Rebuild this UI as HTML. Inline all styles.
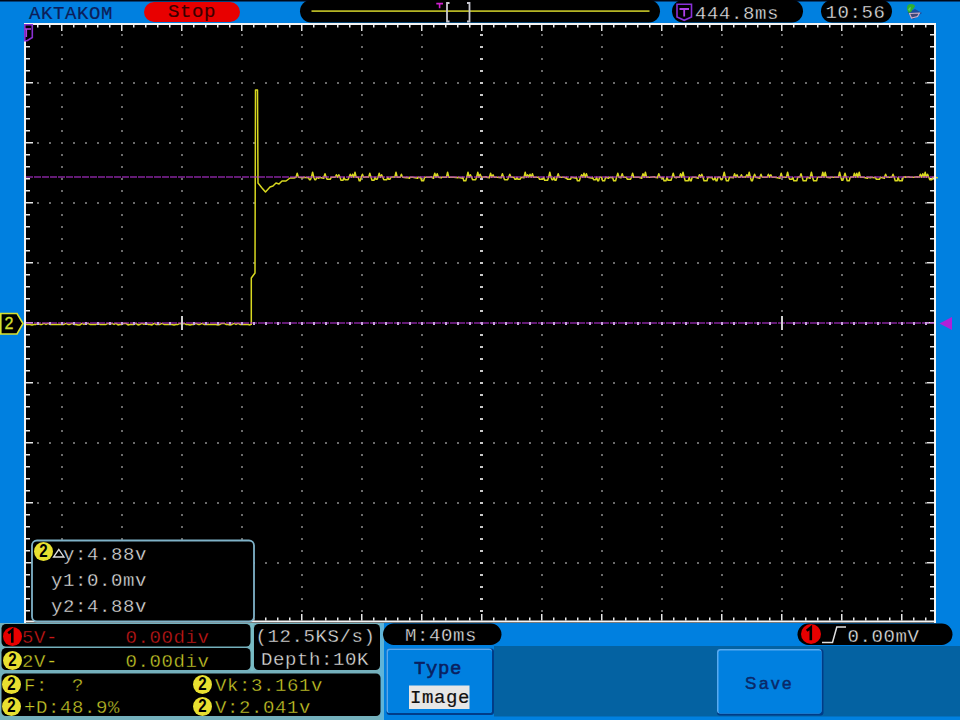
<!DOCTYPE html>
<html><head><meta charset="utf-8"><style>
html,body{margin:0;padding:0;overflow:hidden;}
body{width:960px;height:720px;position:relative;overflow:hidden;background:#0080e0;font-family:"Liberation Mono",monospace;}
.a{position:absolute;}
.t{position:absolute;white-space:pre;line-height:1;}
</style></head><body>
<div class="a" style="left:0;top:0;width:960px;height:1px;background:#000818"></div><div class="a" style="left:0;top:1px;width:960px;height:1px;background:#04407a"></div>
<svg width="960" height="720" viewBox="0 0 960 720" style="position:absolute;left:0;top:0">
<rect x="24" y="23" width="912" height="600" fill="#000"/>
<path d="M61 34h2v2h-2zM61 46h2v2h-2zM61 58h2v2h-2zM61 70h2v2h-2zM61 82h2v2h-2zM61 94h2v2h-2zM61 106h2v2h-2zM61 118h2v2h-2zM61 130h2v2h-2zM61 142h2v2h-2zM61 154h2v2h-2zM61 166h2v2h-2zM61 178h2v2h-2zM61 190h2v2h-2zM61 202h2v2h-2zM61 214h2v2h-2zM61 226h2v2h-2zM61 238h2v2h-2zM61 250h2v2h-2zM61 262h2v2h-2zM61 274h2v2h-2zM61 286h2v2h-2zM61 298h2v2h-2zM61 310h2v2h-2zM61 322h2v2h-2zM61 334h2v2h-2zM61 346h2v2h-2zM61 358h2v2h-2zM61 370h2v2h-2zM61 382h2v2h-2zM61 394h2v2h-2zM61 406h2v2h-2zM61 418h2v2h-2zM61 430h2v2h-2zM61 442h2v2h-2zM61 454h2v2h-2zM61 466h2v2h-2zM61 478h2v2h-2zM61 490h2v2h-2zM61 502h2v2h-2zM61 514h2v2h-2zM61 526h2v2h-2zM61 538h2v2h-2zM61 550h2v2h-2zM61 562h2v2h-2zM61 574h2v2h-2zM61 586h2v2h-2zM61 598h2v2h-2zM61 610h2v2h-2zM121 34h2v2h-2zM121 46h2v2h-2zM121 58h2v2h-2zM121 70h2v2h-2zM121 82h2v2h-2zM121 94h2v2h-2zM121 106h2v2h-2zM121 118h2v2h-2zM121 130h2v2h-2zM121 142h2v2h-2zM121 154h2v2h-2zM121 166h2v2h-2zM121 178h2v2h-2zM121 190h2v2h-2zM121 202h2v2h-2zM121 214h2v2h-2zM121 226h2v2h-2zM121 238h2v2h-2zM121 250h2v2h-2zM121 262h2v2h-2zM121 274h2v2h-2zM121 286h2v2h-2zM121 298h2v2h-2zM121 310h2v2h-2zM121 322h2v2h-2zM121 334h2v2h-2zM121 346h2v2h-2zM121 358h2v2h-2zM121 370h2v2h-2zM121 382h2v2h-2zM121 394h2v2h-2zM121 406h2v2h-2zM121 418h2v2h-2zM121 430h2v2h-2zM121 442h2v2h-2zM121 454h2v2h-2zM121 466h2v2h-2zM121 478h2v2h-2zM121 490h2v2h-2zM121 502h2v2h-2zM121 514h2v2h-2zM121 526h2v2h-2zM121 538h2v2h-2zM121 550h2v2h-2zM121 562h2v2h-2zM121 574h2v2h-2zM121 586h2v2h-2zM121 598h2v2h-2zM121 610h2v2h-2zM181 34h2v2h-2zM181 46h2v2h-2zM181 58h2v2h-2zM181 70h2v2h-2zM181 82h2v2h-2zM181 94h2v2h-2zM181 106h2v2h-2zM181 118h2v2h-2zM181 130h2v2h-2zM181 142h2v2h-2zM181 154h2v2h-2zM181 166h2v2h-2zM181 178h2v2h-2zM181 190h2v2h-2zM181 202h2v2h-2zM181 214h2v2h-2zM181 226h2v2h-2zM181 238h2v2h-2zM181 250h2v2h-2zM181 262h2v2h-2zM181 274h2v2h-2zM181 286h2v2h-2zM181 298h2v2h-2zM181 310h2v2h-2zM181 322h2v2h-2zM181 334h2v2h-2zM181 346h2v2h-2zM181 358h2v2h-2zM181 370h2v2h-2zM181 382h2v2h-2zM181 394h2v2h-2zM181 406h2v2h-2zM181 418h2v2h-2zM181 430h2v2h-2zM181 442h2v2h-2zM181 454h2v2h-2zM181 466h2v2h-2zM181 478h2v2h-2zM181 490h2v2h-2zM181 502h2v2h-2zM181 514h2v2h-2zM181 526h2v2h-2zM181 538h2v2h-2zM181 550h2v2h-2zM181 562h2v2h-2zM181 574h2v2h-2zM181 586h2v2h-2zM181 598h2v2h-2zM181 610h2v2h-2zM241 34h2v2h-2zM241 46h2v2h-2zM241 58h2v2h-2zM241 70h2v2h-2zM241 82h2v2h-2zM241 94h2v2h-2zM241 106h2v2h-2zM241 118h2v2h-2zM241 130h2v2h-2zM241 142h2v2h-2zM241 154h2v2h-2zM241 166h2v2h-2zM241 178h2v2h-2zM241 190h2v2h-2zM241 202h2v2h-2zM241 214h2v2h-2zM241 226h2v2h-2zM241 238h2v2h-2zM241 250h2v2h-2zM241 262h2v2h-2zM241 274h2v2h-2zM241 286h2v2h-2zM241 298h2v2h-2zM241 310h2v2h-2zM241 322h2v2h-2zM241 334h2v2h-2zM241 346h2v2h-2zM241 358h2v2h-2zM241 370h2v2h-2zM241 382h2v2h-2zM241 394h2v2h-2zM241 406h2v2h-2zM241 418h2v2h-2zM241 430h2v2h-2zM241 442h2v2h-2zM241 454h2v2h-2zM241 466h2v2h-2zM241 478h2v2h-2zM241 490h2v2h-2zM241 502h2v2h-2zM241 514h2v2h-2zM241 526h2v2h-2zM241 538h2v2h-2zM241 550h2v2h-2zM241 562h2v2h-2zM241 574h2v2h-2zM241 586h2v2h-2zM241 598h2v2h-2zM241 610h2v2h-2zM301 34h2v2h-2zM301 46h2v2h-2zM301 58h2v2h-2zM301 70h2v2h-2zM301 82h2v2h-2zM301 94h2v2h-2zM301 106h2v2h-2zM301 118h2v2h-2zM301 130h2v2h-2zM301 142h2v2h-2zM301 154h2v2h-2zM301 166h2v2h-2zM301 178h2v2h-2zM301 190h2v2h-2zM301 202h2v2h-2zM301 214h2v2h-2zM301 226h2v2h-2zM301 238h2v2h-2zM301 250h2v2h-2zM301 262h2v2h-2zM301 274h2v2h-2zM301 286h2v2h-2zM301 298h2v2h-2zM301 310h2v2h-2zM301 322h2v2h-2zM301 334h2v2h-2zM301 346h2v2h-2zM301 358h2v2h-2zM301 370h2v2h-2zM301 382h2v2h-2zM301 394h2v2h-2zM301 406h2v2h-2zM301 418h2v2h-2zM301 430h2v2h-2zM301 442h2v2h-2zM301 454h2v2h-2zM301 466h2v2h-2zM301 478h2v2h-2zM301 490h2v2h-2zM301 502h2v2h-2zM301 514h2v2h-2zM301 526h2v2h-2zM301 538h2v2h-2zM301 550h2v2h-2zM301 562h2v2h-2zM301 574h2v2h-2zM301 586h2v2h-2zM301 598h2v2h-2zM301 610h2v2h-2zM361 34h2v2h-2zM361 46h2v2h-2zM361 58h2v2h-2zM361 70h2v2h-2zM361 82h2v2h-2zM361 94h2v2h-2zM361 106h2v2h-2zM361 118h2v2h-2zM361 130h2v2h-2zM361 142h2v2h-2zM361 154h2v2h-2zM361 166h2v2h-2zM361 178h2v2h-2zM361 190h2v2h-2zM361 202h2v2h-2zM361 214h2v2h-2zM361 226h2v2h-2zM361 238h2v2h-2zM361 250h2v2h-2zM361 262h2v2h-2zM361 274h2v2h-2zM361 286h2v2h-2zM361 298h2v2h-2zM361 310h2v2h-2zM361 322h2v2h-2zM361 334h2v2h-2zM361 346h2v2h-2zM361 358h2v2h-2zM361 370h2v2h-2zM361 382h2v2h-2zM361 394h2v2h-2zM361 406h2v2h-2zM361 418h2v2h-2zM361 430h2v2h-2zM361 442h2v2h-2zM361 454h2v2h-2zM361 466h2v2h-2zM361 478h2v2h-2zM361 490h2v2h-2zM361 502h2v2h-2zM361 514h2v2h-2zM361 526h2v2h-2zM361 538h2v2h-2zM361 550h2v2h-2zM361 562h2v2h-2zM361 574h2v2h-2zM361 586h2v2h-2zM361 598h2v2h-2zM361 610h2v2h-2zM421 34h2v2h-2zM421 46h2v2h-2zM421 58h2v2h-2zM421 70h2v2h-2zM421 82h2v2h-2zM421 94h2v2h-2zM421 106h2v2h-2zM421 118h2v2h-2zM421 130h2v2h-2zM421 142h2v2h-2zM421 154h2v2h-2zM421 166h2v2h-2zM421 178h2v2h-2zM421 190h2v2h-2zM421 202h2v2h-2zM421 214h2v2h-2zM421 226h2v2h-2zM421 238h2v2h-2zM421 250h2v2h-2zM421 262h2v2h-2zM421 274h2v2h-2zM421 286h2v2h-2zM421 298h2v2h-2zM421 310h2v2h-2zM421 322h2v2h-2zM421 334h2v2h-2zM421 346h2v2h-2zM421 358h2v2h-2zM421 370h2v2h-2zM421 382h2v2h-2zM421 394h2v2h-2zM421 406h2v2h-2zM421 418h2v2h-2zM421 430h2v2h-2zM421 442h2v2h-2zM421 454h2v2h-2zM421 466h2v2h-2zM421 478h2v2h-2zM421 490h2v2h-2zM421 502h2v2h-2zM421 514h2v2h-2zM421 526h2v2h-2zM421 538h2v2h-2zM421 550h2v2h-2zM421 562h2v2h-2zM421 574h2v2h-2zM421 586h2v2h-2zM421 598h2v2h-2zM421 610h2v2h-2zM541 34h2v2h-2zM541 46h2v2h-2zM541 58h2v2h-2zM541 70h2v2h-2zM541 82h2v2h-2zM541 94h2v2h-2zM541 106h2v2h-2zM541 118h2v2h-2zM541 130h2v2h-2zM541 142h2v2h-2zM541 154h2v2h-2zM541 166h2v2h-2zM541 178h2v2h-2zM541 190h2v2h-2zM541 202h2v2h-2zM541 214h2v2h-2zM541 226h2v2h-2zM541 238h2v2h-2zM541 250h2v2h-2zM541 262h2v2h-2zM541 274h2v2h-2zM541 286h2v2h-2zM541 298h2v2h-2zM541 310h2v2h-2zM541 322h2v2h-2zM541 334h2v2h-2zM541 346h2v2h-2zM541 358h2v2h-2zM541 370h2v2h-2zM541 382h2v2h-2zM541 394h2v2h-2zM541 406h2v2h-2zM541 418h2v2h-2zM541 430h2v2h-2zM541 442h2v2h-2zM541 454h2v2h-2zM541 466h2v2h-2zM541 478h2v2h-2zM541 490h2v2h-2zM541 502h2v2h-2zM541 514h2v2h-2zM541 526h2v2h-2zM541 538h2v2h-2zM541 550h2v2h-2zM541 562h2v2h-2zM541 574h2v2h-2zM541 586h2v2h-2zM541 598h2v2h-2zM541 610h2v2h-2zM601 34h2v2h-2zM601 46h2v2h-2zM601 58h2v2h-2zM601 70h2v2h-2zM601 82h2v2h-2zM601 94h2v2h-2zM601 106h2v2h-2zM601 118h2v2h-2zM601 130h2v2h-2zM601 142h2v2h-2zM601 154h2v2h-2zM601 166h2v2h-2zM601 178h2v2h-2zM601 190h2v2h-2zM601 202h2v2h-2zM601 214h2v2h-2zM601 226h2v2h-2zM601 238h2v2h-2zM601 250h2v2h-2zM601 262h2v2h-2zM601 274h2v2h-2zM601 286h2v2h-2zM601 298h2v2h-2zM601 310h2v2h-2zM601 322h2v2h-2zM601 334h2v2h-2zM601 346h2v2h-2zM601 358h2v2h-2zM601 370h2v2h-2zM601 382h2v2h-2zM601 394h2v2h-2zM601 406h2v2h-2zM601 418h2v2h-2zM601 430h2v2h-2zM601 442h2v2h-2zM601 454h2v2h-2zM601 466h2v2h-2zM601 478h2v2h-2zM601 490h2v2h-2zM601 502h2v2h-2zM601 514h2v2h-2zM601 526h2v2h-2zM601 538h2v2h-2zM601 550h2v2h-2zM601 562h2v2h-2zM601 574h2v2h-2zM601 586h2v2h-2zM601 598h2v2h-2zM601 610h2v2h-2zM661 34h2v2h-2zM661 46h2v2h-2zM661 58h2v2h-2zM661 70h2v2h-2zM661 82h2v2h-2zM661 94h2v2h-2zM661 106h2v2h-2zM661 118h2v2h-2zM661 130h2v2h-2zM661 142h2v2h-2zM661 154h2v2h-2zM661 166h2v2h-2zM661 178h2v2h-2zM661 190h2v2h-2zM661 202h2v2h-2zM661 214h2v2h-2zM661 226h2v2h-2zM661 238h2v2h-2zM661 250h2v2h-2zM661 262h2v2h-2zM661 274h2v2h-2zM661 286h2v2h-2zM661 298h2v2h-2zM661 310h2v2h-2zM661 322h2v2h-2zM661 334h2v2h-2zM661 346h2v2h-2zM661 358h2v2h-2zM661 370h2v2h-2zM661 382h2v2h-2zM661 394h2v2h-2zM661 406h2v2h-2zM661 418h2v2h-2zM661 430h2v2h-2zM661 442h2v2h-2zM661 454h2v2h-2zM661 466h2v2h-2zM661 478h2v2h-2zM661 490h2v2h-2zM661 502h2v2h-2zM661 514h2v2h-2zM661 526h2v2h-2zM661 538h2v2h-2zM661 550h2v2h-2zM661 562h2v2h-2zM661 574h2v2h-2zM661 586h2v2h-2zM661 598h2v2h-2zM661 610h2v2h-2zM721 34h2v2h-2zM721 46h2v2h-2zM721 58h2v2h-2zM721 70h2v2h-2zM721 82h2v2h-2zM721 94h2v2h-2zM721 106h2v2h-2zM721 118h2v2h-2zM721 130h2v2h-2zM721 142h2v2h-2zM721 154h2v2h-2zM721 166h2v2h-2zM721 178h2v2h-2zM721 190h2v2h-2zM721 202h2v2h-2zM721 214h2v2h-2zM721 226h2v2h-2zM721 238h2v2h-2zM721 250h2v2h-2zM721 262h2v2h-2zM721 274h2v2h-2zM721 286h2v2h-2zM721 298h2v2h-2zM721 310h2v2h-2zM721 322h2v2h-2zM721 334h2v2h-2zM721 346h2v2h-2zM721 358h2v2h-2zM721 370h2v2h-2zM721 382h2v2h-2zM721 394h2v2h-2zM721 406h2v2h-2zM721 418h2v2h-2zM721 430h2v2h-2zM721 442h2v2h-2zM721 454h2v2h-2zM721 466h2v2h-2zM721 478h2v2h-2zM721 490h2v2h-2zM721 502h2v2h-2zM721 514h2v2h-2zM721 526h2v2h-2zM721 538h2v2h-2zM721 550h2v2h-2zM721 562h2v2h-2zM721 574h2v2h-2zM721 586h2v2h-2zM721 598h2v2h-2zM721 610h2v2h-2zM781 34h2v2h-2zM781 46h2v2h-2zM781 58h2v2h-2zM781 70h2v2h-2zM781 82h2v2h-2zM781 94h2v2h-2zM781 106h2v2h-2zM781 118h2v2h-2zM781 130h2v2h-2zM781 142h2v2h-2zM781 154h2v2h-2zM781 166h2v2h-2zM781 178h2v2h-2zM781 190h2v2h-2zM781 202h2v2h-2zM781 214h2v2h-2zM781 226h2v2h-2zM781 238h2v2h-2zM781 250h2v2h-2zM781 262h2v2h-2zM781 274h2v2h-2zM781 286h2v2h-2zM781 298h2v2h-2zM781 310h2v2h-2zM781 322h2v2h-2zM781 334h2v2h-2zM781 346h2v2h-2zM781 358h2v2h-2zM781 370h2v2h-2zM781 382h2v2h-2zM781 394h2v2h-2zM781 406h2v2h-2zM781 418h2v2h-2zM781 430h2v2h-2zM781 442h2v2h-2zM781 454h2v2h-2zM781 466h2v2h-2zM781 478h2v2h-2zM781 490h2v2h-2zM781 502h2v2h-2zM781 514h2v2h-2zM781 526h2v2h-2zM781 538h2v2h-2zM781 550h2v2h-2zM781 562h2v2h-2zM781 574h2v2h-2zM781 586h2v2h-2zM781 598h2v2h-2zM781 610h2v2h-2zM841 34h2v2h-2zM841 46h2v2h-2zM841 58h2v2h-2zM841 70h2v2h-2zM841 82h2v2h-2zM841 94h2v2h-2zM841 106h2v2h-2zM841 118h2v2h-2zM841 130h2v2h-2zM841 142h2v2h-2zM841 154h2v2h-2zM841 166h2v2h-2zM841 178h2v2h-2zM841 190h2v2h-2zM841 202h2v2h-2zM841 214h2v2h-2zM841 226h2v2h-2zM841 238h2v2h-2zM841 250h2v2h-2zM841 262h2v2h-2zM841 274h2v2h-2zM841 286h2v2h-2zM841 298h2v2h-2zM841 310h2v2h-2zM841 322h2v2h-2zM841 334h2v2h-2zM841 346h2v2h-2zM841 358h2v2h-2zM841 370h2v2h-2zM841 382h2v2h-2zM841 394h2v2h-2zM841 406h2v2h-2zM841 418h2v2h-2zM841 430h2v2h-2zM841 442h2v2h-2zM841 454h2v2h-2zM841 466h2v2h-2zM841 478h2v2h-2zM841 490h2v2h-2zM841 502h2v2h-2zM841 514h2v2h-2zM841 526h2v2h-2zM841 538h2v2h-2zM841 550h2v2h-2zM841 562h2v2h-2zM841 574h2v2h-2zM841 586h2v2h-2zM841 598h2v2h-2zM841 610h2v2h-2zM901 34h2v2h-2zM901 46h2v2h-2zM901 58h2v2h-2zM901 70h2v2h-2zM901 82h2v2h-2zM901 94h2v2h-2zM901 106h2v2h-2zM901 118h2v2h-2zM901 130h2v2h-2zM901 142h2v2h-2zM901 154h2v2h-2zM901 166h2v2h-2zM901 178h2v2h-2zM901 190h2v2h-2zM901 202h2v2h-2zM901 214h2v2h-2zM901 226h2v2h-2zM901 238h2v2h-2zM901 250h2v2h-2zM901 262h2v2h-2zM901 274h2v2h-2zM901 286h2v2h-2zM901 298h2v2h-2zM901 310h2v2h-2zM901 322h2v2h-2zM901 334h2v2h-2zM901 346h2v2h-2zM901 358h2v2h-2zM901 370h2v2h-2zM901 382h2v2h-2zM901 394h2v2h-2zM901 406h2v2h-2zM901 418h2v2h-2zM901 430h2v2h-2zM901 442h2v2h-2zM901 454h2v2h-2zM901 466h2v2h-2zM901 478h2v2h-2zM901 490h2v2h-2zM901 502h2v2h-2zM901 514h2v2h-2zM901 526h2v2h-2zM901 538h2v2h-2zM901 550h2v2h-2zM901 562h2v2h-2zM901 574h2v2h-2zM901 586h2v2h-2zM901 598h2v2h-2zM901 610h2v2h-2zM37 82h2v2h-2zM49 82h2v2h-2zM61 82h2v2h-2zM73 82h2v2h-2zM85 82h2v2h-2zM97 82h2v2h-2zM109 82h2v2h-2zM121 82h2v2h-2zM133 82h2v2h-2zM145 82h2v2h-2zM157 82h2v2h-2zM169 82h2v2h-2zM181 82h2v2h-2zM193 82h2v2h-2zM205 82h2v2h-2zM217 82h2v2h-2zM229 82h2v2h-2zM241 82h2v2h-2zM253 82h2v2h-2zM265 82h2v2h-2zM277 82h2v2h-2zM289 82h2v2h-2zM301 82h2v2h-2zM313 82h2v2h-2zM325 82h2v2h-2zM337 82h2v2h-2zM349 82h2v2h-2zM361 82h2v2h-2zM373 82h2v2h-2zM385 82h2v2h-2zM397 82h2v2h-2zM409 82h2v2h-2zM421 82h2v2h-2zM433 82h2v2h-2zM445 82h2v2h-2zM457 82h2v2h-2zM469 82h2v2h-2zM481 82h2v2h-2zM493 82h2v2h-2zM505 82h2v2h-2zM517 82h2v2h-2zM529 82h2v2h-2zM541 82h2v2h-2zM553 82h2v2h-2zM565 82h2v2h-2zM577 82h2v2h-2zM589 82h2v2h-2zM601 82h2v2h-2zM613 82h2v2h-2zM625 82h2v2h-2zM637 82h2v2h-2zM649 82h2v2h-2zM661 82h2v2h-2zM673 82h2v2h-2zM685 82h2v2h-2zM697 82h2v2h-2zM709 82h2v2h-2zM721 82h2v2h-2zM733 82h2v2h-2zM745 82h2v2h-2zM757 82h2v2h-2zM769 82h2v2h-2zM781 82h2v2h-2zM793 82h2v2h-2zM805 82h2v2h-2zM817 82h2v2h-2zM829 82h2v2h-2zM841 82h2v2h-2zM853 82h2v2h-2zM865 82h2v2h-2zM877 82h2v2h-2zM889 82h2v2h-2zM901 82h2v2h-2zM913 82h2v2h-2zM925 82h2v2h-2zM37 142h2v2h-2zM49 142h2v2h-2zM61 142h2v2h-2zM73 142h2v2h-2zM85 142h2v2h-2zM97 142h2v2h-2zM109 142h2v2h-2zM121 142h2v2h-2zM133 142h2v2h-2zM145 142h2v2h-2zM157 142h2v2h-2zM169 142h2v2h-2zM181 142h2v2h-2zM193 142h2v2h-2zM205 142h2v2h-2zM217 142h2v2h-2zM229 142h2v2h-2zM241 142h2v2h-2zM253 142h2v2h-2zM265 142h2v2h-2zM277 142h2v2h-2zM289 142h2v2h-2zM301 142h2v2h-2zM313 142h2v2h-2zM325 142h2v2h-2zM337 142h2v2h-2zM349 142h2v2h-2zM361 142h2v2h-2zM373 142h2v2h-2zM385 142h2v2h-2zM397 142h2v2h-2zM409 142h2v2h-2zM421 142h2v2h-2zM433 142h2v2h-2zM445 142h2v2h-2zM457 142h2v2h-2zM469 142h2v2h-2zM481 142h2v2h-2zM493 142h2v2h-2zM505 142h2v2h-2zM517 142h2v2h-2zM529 142h2v2h-2zM541 142h2v2h-2zM553 142h2v2h-2zM565 142h2v2h-2zM577 142h2v2h-2zM589 142h2v2h-2zM601 142h2v2h-2zM613 142h2v2h-2zM625 142h2v2h-2zM637 142h2v2h-2zM649 142h2v2h-2zM661 142h2v2h-2zM673 142h2v2h-2zM685 142h2v2h-2zM697 142h2v2h-2zM709 142h2v2h-2zM721 142h2v2h-2zM733 142h2v2h-2zM745 142h2v2h-2zM757 142h2v2h-2zM769 142h2v2h-2zM781 142h2v2h-2zM793 142h2v2h-2zM805 142h2v2h-2zM817 142h2v2h-2zM829 142h2v2h-2zM841 142h2v2h-2zM853 142h2v2h-2zM865 142h2v2h-2zM877 142h2v2h-2zM889 142h2v2h-2zM901 142h2v2h-2zM913 142h2v2h-2zM925 142h2v2h-2zM37 202h2v2h-2zM49 202h2v2h-2zM61 202h2v2h-2zM73 202h2v2h-2zM85 202h2v2h-2zM97 202h2v2h-2zM109 202h2v2h-2zM121 202h2v2h-2zM133 202h2v2h-2zM145 202h2v2h-2zM157 202h2v2h-2zM169 202h2v2h-2zM181 202h2v2h-2zM193 202h2v2h-2zM205 202h2v2h-2zM217 202h2v2h-2zM229 202h2v2h-2zM241 202h2v2h-2zM253 202h2v2h-2zM265 202h2v2h-2zM277 202h2v2h-2zM289 202h2v2h-2zM301 202h2v2h-2zM313 202h2v2h-2zM325 202h2v2h-2zM337 202h2v2h-2zM349 202h2v2h-2zM361 202h2v2h-2zM373 202h2v2h-2zM385 202h2v2h-2zM397 202h2v2h-2zM409 202h2v2h-2zM421 202h2v2h-2zM433 202h2v2h-2zM445 202h2v2h-2zM457 202h2v2h-2zM469 202h2v2h-2zM481 202h2v2h-2zM493 202h2v2h-2zM505 202h2v2h-2zM517 202h2v2h-2zM529 202h2v2h-2zM541 202h2v2h-2zM553 202h2v2h-2zM565 202h2v2h-2zM577 202h2v2h-2zM589 202h2v2h-2zM601 202h2v2h-2zM613 202h2v2h-2zM625 202h2v2h-2zM637 202h2v2h-2zM649 202h2v2h-2zM661 202h2v2h-2zM673 202h2v2h-2zM685 202h2v2h-2zM697 202h2v2h-2zM709 202h2v2h-2zM721 202h2v2h-2zM733 202h2v2h-2zM745 202h2v2h-2zM757 202h2v2h-2zM769 202h2v2h-2zM781 202h2v2h-2zM793 202h2v2h-2zM805 202h2v2h-2zM817 202h2v2h-2zM829 202h2v2h-2zM841 202h2v2h-2zM853 202h2v2h-2zM865 202h2v2h-2zM877 202h2v2h-2zM889 202h2v2h-2zM901 202h2v2h-2zM913 202h2v2h-2zM925 202h2v2h-2zM37 262h2v2h-2zM49 262h2v2h-2zM61 262h2v2h-2zM73 262h2v2h-2zM85 262h2v2h-2zM97 262h2v2h-2zM109 262h2v2h-2zM121 262h2v2h-2zM133 262h2v2h-2zM145 262h2v2h-2zM157 262h2v2h-2zM169 262h2v2h-2zM181 262h2v2h-2zM193 262h2v2h-2zM205 262h2v2h-2zM217 262h2v2h-2zM229 262h2v2h-2zM241 262h2v2h-2zM253 262h2v2h-2zM265 262h2v2h-2zM277 262h2v2h-2zM289 262h2v2h-2zM301 262h2v2h-2zM313 262h2v2h-2zM325 262h2v2h-2zM337 262h2v2h-2zM349 262h2v2h-2zM361 262h2v2h-2zM373 262h2v2h-2zM385 262h2v2h-2zM397 262h2v2h-2zM409 262h2v2h-2zM421 262h2v2h-2zM433 262h2v2h-2zM445 262h2v2h-2zM457 262h2v2h-2zM469 262h2v2h-2zM481 262h2v2h-2zM493 262h2v2h-2zM505 262h2v2h-2zM517 262h2v2h-2zM529 262h2v2h-2zM541 262h2v2h-2zM553 262h2v2h-2zM565 262h2v2h-2zM577 262h2v2h-2zM589 262h2v2h-2zM601 262h2v2h-2zM613 262h2v2h-2zM625 262h2v2h-2zM637 262h2v2h-2zM649 262h2v2h-2zM661 262h2v2h-2zM673 262h2v2h-2zM685 262h2v2h-2zM697 262h2v2h-2zM709 262h2v2h-2zM721 262h2v2h-2zM733 262h2v2h-2zM745 262h2v2h-2zM757 262h2v2h-2zM769 262h2v2h-2zM781 262h2v2h-2zM793 262h2v2h-2zM805 262h2v2h-2zM817 262h2v2h-2zM829 262h2v2h-2zM841 262h2v2h-2zM853 262h2v2h-2zM865 262h2v2h-2zM877 262h2v2h-2zM889 262h2v2h-2zM901 262h2v2h-2zM913 262h2v2h-2zM925 262h2v2h-2zM37 382h2v2h-2zM49 382h2v2h-2zM61 382h2v2h-2zM73 382h2v2h-2zM85 382h2v2h-2zM97 382h2v2h-2zM109 382h2v2h-2zM121 382h2v2h-2zM133 382h2v2h-2zM145 382h2v2h-2zM157 382h2v2h-2zM169 382h2v2h-2zM181 382h2v2h-2zM193 382h2v2h-2zM205 382h2v2h-2zM217 382h2v2h-2zM229 382h2v2h-2zM241 382h2v2h-2zM253 382h2v2h-2zM265 382h2v2h-2zM277 382h2v2h-2zM289 382h2v2h-2zM301 382h2v2h-2zM313 382h2v2h-2zM325 382h2v2h-2zM337 382h2v2h-2zM349 382h2v2h-2zM361 382h2v2h-2zM373 382h2v2h-2zM385 382h2v2h-2zM397 382h2v2h-2zM409 382h2v2h-2zM421 382h2v2h-2zM433 382h2v2h-2zM445 382h2v2h-2zM457 382h2v2h-2zM469 382h2v2h-2zM481 382h2v2h-2zM493 382h2v2h-2zM505 382h2v2h-2zM517 382h2v2h-2zM529 382h2v2h-2zM541 382h2v2h-2zM553 382h2v2h-2zM565 382h2v2h-2zM577 382h2v2h-2zM589 382h2v2h-2zM601 382h2v2h-2zM613 382h2v2h-2zM625 382h2v2h-2zM637 382h2v2h-2zM649 382h2v2h-2zM661 382h2v2h-2zM673 382h2v2h-2zM685 382h2v2h-2zM697 382h2v2h-2zM709 382h2v2h-2zM721 382h2v2h-2zM733 382h2v2h-2zM745 382h2v2h-2zM757 382h2v2h-2zM769 382h2v2h-2zM781 382h2v2h-2zM793 382h2v2h-2zM805 382h2v2h-2zM817 382h2v2h-2zM829 382h2v2h-2zM841 382h2v2h-2zM853 382h2v2h-2zM865 382h2v2h-2zM877 382h2v2h-2zM889 382h2v2h-2zM901 382h2v2h-2zM913 382h2v2h-2zM925 382h2v2h-2zM37 442h2v2h-2zM49 442h2v2h-2zM61 442h2v2h-2zM73 442h2v2h-2zM85 442h2v2h-2zM97 442h2v2h-2zM109 442h2v2h-2zM121 442h2v2h-2zM133 442h2v2h-2zM145 442h2v2h-2zM157 442h2v2h-2zM169 442h2v2h-2zM181 442h2v2h-2zM193 442h2v2h-2zM205 442h2v2h-2zM217 442h2v2h-2zM229 442h2v2h-2zM241 442h2v2h-2zM253 442h2v2h-2zM265 442h2v2h-2zM277 442h2v2h-2zM289 442h2v2h-2zM301 442h2v2h-2zM313 442h2v2h-2zM325 442h2v2h-2zM337 442h2v2h-2zM349 442h2v2h-2zM361 442h2v2h-2zM373 442h2v2h-2zM385 442h2v2h-2zM397 442h2v2h-2zM409 442h2v2h-2zM421 442h2v2h-2zM433 442h2v2h-2zM445 442h2v2h-2zM457 442h2v2h-2zM469 442h2v2h-2zM481 442h2v2h-2zM493 442h2v2h-2zM505 442h2v2h-2zM517 442h2v2h-2zM529 442h2v2h-2zM541 442h2v2h-2zM553 442h2v2h-2zM565 442h2v2h-2zM577 442h2v2h-2zM589 442h2v2h-2zM601 442h2v2h-2zM613 442h2v2h-2zM625 442h2v2h-2zM637 442h2v2h-2zM649 442h2v2h-2zM661 442h2v2h-2zM673 442h2v2h-2zM685 442h2v2h-2zM697 442h2v2h-2zM709 442h2v2h-2zM721 442h2v2h-2zM733 442h2v2h-2zM745 442h2v2h-2zM757 442h2v2h-2zM769 442h2v2h-2zM781 442h2v2h-2zM793 442h2v2h-2zM805 442h2v2h-2zM817 442h2v2h-2zM829 442h2v2h-2zM841 442h2v2h-2zM853 442h2v2h-2zM865 442h2v2h-2zM877 442h2v2h-2zM889 442h2v2h-2zM901 442h2v2h-2zM913 442h2v2h-2zM925 442h2v2h-2zM37 502h2v2h-2zM49 502h2v2h-2zM61 502h2v2h-2zM73 502h2v2h-2zM85 502h2v2h-2zM97 502h2v2h-2zM109 502h2v2h-2zM121 502h2v2h-2zM133 502h2v2h-2zM145 502h2v2h-2zM157 502h2v2h-2zM169 502h2v2h-2zM181 502h2v2h-2zM193 502h2v2h-2zM205 502h2v2h-2zM217 502h2v2h-2zM229 502h2v2h-2zM241 502h2v2h-2zM253 502h2v2h-2zM265 502h2v2h-2zM277 502h2v2h-2zM289 502h2v2h-2zM301 502h2v2h-2zM313 502h2v2h-2zM325 502h2v2h-2zM337 502h2v2h-2zM349 502h2v2h-2zM361 502h2v2h-2zM373 502h2v2h-2zM385 502h2v2h-2zM397 502h2v2h-2zM409 502h2v2h-2zM421 502h2v2h-2zM433 502h2v2h-2zM445 502h2v2h-2zM457 502h2v2h-2zM469 502h2v2h-2zM481 502h2v2h-2zM493 502h2v2h-2zM505 502h2v2h-2zM517 502h2v2h-2zM529 502h2v2h-2zM541 502h2v2h-2zM553 502h2v2h-2zM565 502h2v2h-2zM577 502h2v2h-2zM589 502h2v2h-2zM601 502h2v2h-2zM613 502h2v2h-2zM625 502h2v2h-2zM637 502h2v2h-2zM649 502h2v2h-2zM661 502h2v2h-2zM673 502h2v2h-2zM685 502h2v2h-2zM697 502h2v2h-2zM709 502h2v2h-2zM721 502h2v2h-2zM733 502h2v2h-2zM745 502h2v2h-2zM757 502h2v2h-2zM769 502h2v2h-2zM781 502h2v2h-2zM793 502h2v2h-2zM805 502h2v2h-2zM817 502h2v2h-2zM829 502h2v2h-2zM841 502h2v2h-2zM853 502h2v2h-2zM865 502h2v2h-2zM877 502h2v2h-2zM889 502h2v2h-2zM901 502h2v2h-2zM913 502h2v2h-2zM925 502h2v2h-2zM37 562h2v2h-2zM49 562h2v2h-2zM61 562h2v2h-2zM73 562h2v2h-2zM85 562h2v2h-2zM97 562h2v2h-2zM109 562h2v2h-2zM121 562h2v2h-2zM133 562h2v2h-2zM145 562h2v2h-2zM157 562h2v2h-2zM169 562h2v2h-2zM181 562h2v2h-2zM193 562h2v2h-2zM205 562h2v2h-2zM217 562h2v2h-2zM229 562h2v2h-2zM241 562h2v2h-2zM253 562h2v2h-2zM265 562h2v2h-2zM277 562h2v2h-2zM289 562h2v2h-2zM301 562h2v2h-2zM313 562h2v2h-2zM325 562h2v2h-2zM337 562h2v2h-2zM349 562h2v2h-2zM361 562h2v2h-2zM373 562h2v2h-2zM385 562h2v2h-2zM397 562h2v2h-2zM409 562h2v2h-2zM421 562h2v2h-2zM433 562h2v2h-2zM445 562h2v2h-2zM457 562h2v2h-2zM469 562h2v2h-2zM481 562h2v2h-2zM493 562h2v2h-2zM505 562h2v2h-2zM517 562h2v2h-2zM529 562h2v2h-2zM541 562h2v2h-2zM553 562h2v2h-2zM565 562h2v2h-2zM577 562h2v2h-2zM589 562h2v2h-2zM601 562h2v2h-2zM613 562h2v2h-2zM625 562h2v2h-2zM637 562h2v2h-2zM649 562h2v2h-2zM661 562h2v2h-2zM673 562h2v2h-2zM685 562h2v2h-2zM697 562h2v2h-2zM709 562h2v2h-2zM721 562h2v2h-2zM733 562h2v2h-2zM745 562h2v2h-2zM757 562h2v2h-2zM769 562h2v2h-2zM781 562h2v2h-2zM793 562h2v2h-2zM805 562h2v2h-2zM817 562h2v2h-2zM829 562h2v2h-2zM841 562h2v2h-2zM853 562h2v2h-2zM865 562h2v2h-2zM877 562h2v2h-2zM889 562h2v2h-2zM901 562h2v2h-2zM913 562h2v2h-2zM925 562h2v2h-2z" fill="#6a6a6a"/>
<path d="M480 34h3v2h-3zM480 46h3v2h-3zM480 58h3v2h-3zM480 70h3v2h-3zM480 82h3v2h-3zM480 94h3v2h-3zM480 106h3v2h-3zM480 118h3v2h-3zM480 130h3v2h-3zM480 142h3v2h-3zM480 154h3v2h-3zM480 166h3v2h-3zM480 178h3v2h-3zM480 190h3v2h-3zM480 202h3v2h-3zM480 214h3v2h-3zM480 226h3v2h-3zM480 238h3v2h-3zM480 250h3v2h-3zM480 262h3v2h-3zM480 274h3v2h-3zM480 286h3v2h-3zM480 298h3v2h-3zM480 310h3v2h-3zM480 322h3v2h-3zM480 334h3v2h-3zM480 346h3v2h-3zM480 358h3v2h-3zM480 370h3v2h-3zM480 382h3v2h-3zM480 394h3v2h-3zM480 406h3v2h-3zM480 418h3v2h-3zM480 430h3v2h-3zM480 442h3v2h-3zM480 454h3v2h-3zM480 466h3v2h-3zM480 478h3v2h-3zM480 490h3v2h-3zM480 502h3v2h-3zM480 514h3v2h-3zM480 526h3v2h-3zM480 538h3v2h-3zM480 550h3v2h-3zM480 562h3v2h-3zM480 574h3v2h-3zM480 586h3v2h-3zM480 598h3v2h-3zM480 610h3v2h-3z" fill="#c8c8c8"/>
<path d="M37 25h1.5v2.6h-1.5zM37 617.4h1.5v3.1h-1.5zM49 25h1.5v2.6h-1.5zM49 617.4h1.5v3.1h-1.5zM61 25h1.5v6h-1.5zM61 614.0h1.5v6.5h-1.5zM73 25h1.5v2.6h-1.5zM73 617.4h1.5v3.1h-1.5zM85 25h1.5v2.6h-1.5zM85 617.4h1.5v3.1h-1.5zM97 25h1.5v2.6h-1.5zM97 617.4h1.5v3.1h-1.5zM109 25h1.5v2.6h-1.5zM109 617.4h1.5v3.1h-1.5zM121 25h1.5v6h-1.5zM121 614.0h1.5v6.5h-1.5zM133 25h1.5v2.6h-1.5zM133 617.4h1.5v3.1h-1.5zM145 25h1.5v2.6h-1.5zM145 617.4h1.5v3.1h-1.5zM157 25h1.5v2.6h-1.5zM157 617.4h1.5v3.1h-1.5zM169 25h1.5v2.6h-1.5zM169 617.4h1.5v3.1h-1.5zM181 25h1.5v6h-1.5zM181 614.0h1.5v6.5h-1.5zM193 25h1.5v2.6h-1.5zM193 617.4h1.5v3.1h-1.5zM205 25h1.5v2.6h-1.5zM205 617.4h1.5v3.1h-1.5zM217 25h1.5v2.6h-1.5zM217 617.4h1.5v3.1h-1.5zM229 25h1.5v2.6h-1.5zM229 617.4h1.5v3.1h-1.5zM241 25h1.5v6h-1.5zM241 614.0h1.5v6.5h-1.5zM253 25h1.5v2.6h-1.5zM253 617.4h1.5v3.1h-1.5zM265 25h1.5v2.6h-1.5zM265 617.4h1.5v3.1h-1.5zM277 25h1.5v2.6h-1.5zM277 617.4h1.5v3.1h-1.5zM289 25h1.5v2.6h-1.5zM289 617.4h1.5v3.1h-1.5zM301 25h1.5v6h-1.5zM301 614.0h1.5v6.5h-1.5zM313 25h1.5v2.6h-1.5zM313 617.4h1.5v3.1h-1.5zM325 25h1.5v2.6h-1.5zM325 617.4h1.5v3.1h-1.5zM337 25h1.5v2.6h-1.5zM337 617.4h1.5v3.1h-1.5zM349 25h1.5v2.6h-1.5zM349 617.4h1.5v3.1h-1.5zM361 25h1.5v6h-1.5zM361 614.0h1.5v6.5h-1.5zM373 25h1.5v2.6h-1.5zM373 617.4h1.5v3.1h-1.5zM385 25h1.5v2.6h-1.5zM385 617.4h1.5v3.1h-1.5zM397 25h1.5v2.6h-1.5zM397 617.4h1.5v3.1h-1.5zM409 25h1.5v2.6h-1.5zM409 617.4h1.5v3.1h-1.5zM421 25h1.5v6h-1.5zM421 614.0h1.5v6.5h-1.5zM433 25h1.5v2.6h-1.5zM433 617.4h1.5v3.1h-1.5zM445 25h1.5v2.6h-1.5zM445 617.4h1.5v3.1h-1.5zM457 25h1.5v2.6h-1.5zM457 617.4h1.5v3.1h-1.5zM469 25h1.5v2.6h-1.5zM469 617.4h1.5v3.1h-1.5zM481 25h1.5v6h-1.5zM481 614.0h1.5v6.5h-1.5zM493 25h1.5v2.6h-1.5zM493 617.4h1.5v3.1h-1.5zM505 25h1.5v2.6h-1.5zM505 617.4h1.5v3.1h-1.5zM517 25h1.5v2.6h-1.5zM517 617.4h1.5v3.1h-1.5zM529 25h1.5v2.6h-1.5zM529 617.4h1.5v3.1h-1.5zM541 25h1.5v6h-1.5zM541 614.0h1.5v6.5h-1.5zM553 25h1.5v2.6h-1.5zM553 617.4h1.5v3.1h-1.5zM565 25h1.5v2.6h-1.5zM565 617.4h1.5v3.1h-1.5zM577 25h1.5v2.6h-1.5zM577 617.4h1.5v3.1h-1.5zM589 25h1.5v2.6h-1.5zM589 617.4h1.5v3.1h-1.5zM601 25h1.5v6h-1.5zM601 614.0h1.5v6.5h-1.5zM613 25h1.5v2.6h-1.5zM613 617.4h1.5v3.1h-1.5zM625 25h1.5v2.6h-1.5zM625 617.4h1.5v3.1h-1.5zM637 25h1.5v2.6h-1.5zM637 617.4h1.5v3.1h-1.5zM649 25h1.5v2.6h-1.5zM649 617.4h1.5v3.1h-1.5zM661 25h1.5v6h-1.5zM661 614.0h1.5v6.5h-1.5zM673 25h1.5v2.6h-1.5zM673 617.4h1.5v3.1h-1.5zM685 25h1.5v2.6h-1.5zM685 617.4h1.5v3.1h-1.5zM697 25h1.5v2.6h-1.5zM697 617.4h1.5v3.1h-1.5zM709 25h1.5v2.6h-1.5zM709 617.4h1.5v3.1h-1.5zM721 25h1.5v6h-1.5zM721 614.0h1.5v6.5h-1.5zM733 25h1.5v2.6h-1.5zM733 617.4h1.5v3.1h-1.5zM745 25h1.5v2.6h-1.5zM745 617.4h1.5v3.1h-1.5zM757 25h1.5v2.6h-1.5zM757 617.4h1.5v3.1h-1.5zM769 25h1.5v2.6h-1.5zM769 617.4h1.5v3.1h-1.5zM781 25h1.5v6h-1.5zM781 614.0h1.5v6.5h-1.5zM793 25h1.5v2.6h-1.5zM793 617.4h1.5v3.1h-1.5zM805 25h1.5v2.6h-1.5zM805 617.4h1.5v3.1h-1.5zM817 25h1.5v2.6h-1.5zM817 617.4h1.5v3.1h-1.5zM829 25h1.5v2.6h-1.5zM829 617.4h1.5v3.1h-1.5zM841 25h1.5v6h-1.5zM841 614.0h1.5v6.5h-1.5zM853 25h1.5v2.6h-1.5zM853 617.4h1.5v3.1h-1.5zM865 25h1.5v2.6h-1.5zM865 617.4h1.5v3.1h-1.5zM877 25h1.5v2.6h-1.5zM877 617.4h1.5v3.1h-1.5zM889 25h1.5v2.6h-1.5zM889 617.4h1.5v3.1h-1.5zM901 25h1.5v6h-1.5zM901 614.0h1.5v6.5h-1.5zM913 25h1.5v2.6h-1.5zM913 617.4h1.5v3.1h-1.5zM925 25h1.5v2.6h-1.5zM925 617.4h1.5v3.1h-1.5zM26 34h4v1.5h-4zM930 34h4v1.5h-4zM26 46h4v1.5h-4zM930 46h4v1.5h-4zM26 58h4v1.5h-4zM930 58h4v1.5h-4zM26 70h4v1.5h-4zM930 70h4v1.5h-4zM26 82h7v1.5h-7zM927 82h7v1.5h-7zM26 94h4v1.5h-4zM930 94h4v1.5h-4zM26 106h4v1.5h-4zM930 106h4v1.5h-4zM26 118h4v1.5h-4zM930 118h4v1.5h-4zM26 130h4v1.5h-4zM930 130h4v1.5h-4zM26 142h7v1.5h-7zM927 142h7v1.5h-7zM26 154h4v1.5h-4zM930 154h4v1.5h-4zM26 166h4v1.5h-4zM930 166h4v1.5h-4zM26 178h4v1.5h-4zM930 178h4v1.5h-4zM26 190h4v1.5h-4zM930 190h4v1.5h-4zM26 202h7v1.5h-7zM927 202h7v1.5h-7zM26 214h4v1.5h-4zM930 214h4v1.5h-4zM26 226h4v1.5h-4zM930 226h4v1.5h-4zM26 238h4v1.5h-4zM930 238h4v1.5h-4zM26 250h4v1.5h-4zM930 250h4v1.5h-4zM26 262h7v1.5h-7zM927 262h7v1.5h-7zM26 274h4v1.5h-4zM930 274h4v1.5h-4zM26 286h4v1.5h-4zM930 286h4v1.5h-4zM26 298h4v1.5h-4zM930 298h4v1.5h-4zM26 310h4v1.5h-4zM930 310h4v1.5h-4zM26 322h7v1.5h-7zM927 322h7v1.5h-7zM26 334h4v1.5h-4zM930 334h4v1.5h-4zM26 346h4v1.5h-4zM930 346h4v1.5h-4zM26 358h4v1.5h-4zM930 358h4v1.5h-4zM26 370h4v1.5h-4zM930 370h4v1.5h-4zM26 382h7v1.5h-7zM927 382h7v1.5h-7zM26 394h4v1.5h-4zM930 394h4v1.5h-4zM26 406h4v1.5h-4zM930 406h4v1.5h-4zM26 418h4v1.5h-4zM930 418h4v1.5h-4zM26 430h4v1.5h-4zM930 430h4v1.5h-4zM26 442h7v1.5h-7zM927 442h7v1.5h-7zM26 454h4v1.5h-4zM930 454h4v1.5h-4zM26 466h4v1.5h-4zM930 466h4v1.5h-4zM26 478h4v1.5h-4zM930 478h4v1.5h-4zM26 490h4v1.5h-4zM930 490h4v1.5h-4zM26 502h7v1.5h-7zM927 502h7v1.5h-7zM26 514h4v1.5h-4zM930 514h4v1.5h-4zM26 526h4v1.5h-4zM930 526h4v1.5h-4zM26 538h4v1.5h-4zM930 538h4v1.5h-4zM26 550h4v1.5h-4zM930 550h4v1.5h-4zM26 562h7v1.5h-7zM927 562h7v1.5h-7zM26 574h4v1.5h-4zM930 574h4v1.5h-4zM26 586h4v1.5h-4zM930 586h4v1.5h-4zM26 598h4v1.5h-4zM930 598h4v1.5h-4zM26 610h4v1.5h-4zM930 610h4v1.5h-4z" fill="#e8e8e8"/>
<polyline points="26.0,324.4 28.0,324.4 30.0,324.4 32.0,324.9 34.0,324.4 36.0,324.4 38.0,323.4 40.0,324.4 42.0,324.4 44.0,323.4 46.0,324.4 48.0,323.4 50.0,324.4 52.0,324.4 54.0,324.4 56.0,324.4 58.0,324.4 60.0,324.4 62.0,324.4 64.0,324.4 66.0,323.4 68.0,324.4 70.0,324.4 72.0,323.4 74.0,324.4 76.0,324.4 78.0,324.9 80.0,324.9 82.0,323.4 84.0,324.4 86.0,323.4 88.0,323.4 90.0,324.4 92.0,324.4 94.0,324.4 96.0,324.4 98.0,323.4 100.0,324.4 102.0,324.4 104.0,324.4 106.0,324.4 108.0,323.4 110.0,324.4 112.0,323.4 114.0,324.4 116.0,323.4 118.0,324.9 120.0,324.4 122.0,324.4 124.0,323.4 126.0,323.4 128.0,324.9 130.0,324.4 132.0,324.4 134.0,324.4 136.0,323.4 138.0,324.9 140.0,324.4 142.0,323.4 144.0,324.4 146.0,323.4 148.0,324.4 150.0,324.4 152.0,324.9 154.0,323.4 156.0,324.4 158.0,324.4 160.0,324.4 162.0,323.4 164.0,324.4 166.0,324.4 168.0,324.4 170.0,324.4 172.0,324.4 174.0,324.9 176.0,324.4 178.0,324.4 180.0,323.4 182.0,324.4 184.0,323.4 186.0,324.4 188.0,324.4 190.0,324.9 192.0,324.4 194.0,324.4 196.0,323.4 198.0,324.4 200.0,324.4 202.0,323.4 204.0,324.4 206.0,324.4 208.0,324.4 210.0,324.4 212.0,324.4 214.0,324.4 216.0,324.4 218.0,324.9 220.0,324.4 222.0,323.4 224.0,323.4 226.0,324.4 228.0,324.4 230.0,324.9 232.0,324.4 234.0,323.4 236.0,324.4 238.0,323.4 240.0,324.4 242.0,324.4 244.0,324.4 246.0,324.4 248.0,324.4 250.0,324.9 251.3,324.4 251.3,278.0 255.0,273.0 255.5,90.0 257.5,90.0 258.0,183.0 262.0,188.0 265.5,192.0 270.0,187.0 273.0,186.0 276.0,183.0 279.0,184.0 282.0,181.0 286.0,181.0 290.0,178.0 294.0,178.0 296.0,177.3 297.2,173.3 298.4,177.3 298.4,177.3 303.4,177.8 303.4,177.3 308.4,177.8 308.4,177.3 309.4,179.8 310.4,179.8 311.4,177.3 311.4,177.3 312.6,172.3 313.8,177.3 313.8,177.3 314.8,179.8 315.8,179.8 316.8,177.3 316.8,177.3 318.8,178.3 318.8,177.3 323.8,178.3 323.8,177.3 325.0,173.8 326.2,177.3 326.2,177.3 327.2,179.3 330.2,179.3 331.2,177.3 331.2,177.3 335.2,177.3 335.2,177.3 336.4,174.8 337.6,177.3 337.6,177.3 338.8,174.8 340.0,177.3 340.0,177.3 341.0,180.3 343.0,180.3 344.0,177.3 344.0,177.3 345.0,179.8 348.0,179.8 349.0,177.3 349.0,177.3 350.2,174.3 351.4,177.3 351.4,177.3 352.6,174.3 353.8,177.3 353.8,177.3 355.0,172.3 356.2,177.3 356.2,177.3 358.2,177.3 358.2,177.3 359.2,180.8 360.2,180.8 361.2,177.3 361.2,177.3 362.4,174.3 363.6,177.3 363.6,177.3 368.6,176.8 368.6,177.3 369.8,173.3 371.0,177.3 371.0,177.3 372.0,180.3 374.0,180.3 375.0,177.3 375.0,177.3 376.0,179.3 377.0,179.3 378.0,177.3 378.0,177.3 379.2,173.3 380.4,177.3 380.4,177.3 381.6,174.8 382.8,177.3 382.8,177.3 383.8,179.8 386.8,179.8 387.8,177.3 387.8,177.3 388.8,179.3 389.8,179.3 390.8,177.3 390.8,177.3 394.8,176.8 394.8,177.3 396.0,172.3 397.2,177.3 397.2,177.3 400.2,177.3 400.2,177.3 401.4,174.3 402.6,177.3 402.6,177.3 406.6,177.8 406.6,177.3 409.6,178.3 409.6,177.3 412.6,177.3 412.6,177.3 417.6,178.3 417.6,177.3 420.6,177.8 420.6,177.3 421.6,180.8 423.6,180.8 424.6,177.3 424.6,177.3 429.6,177.3 429.6,177.3 431.6,176.8 431.6,177.3 433.6,178.3 433.6,177.3 434.8,173.3 436.0,177.3 436.0,177.3 437.2,173.8 438.4,177.3 438.4,177.3 441.4,177.8 441.4,177.3 446.4,177.3 446.4,177.3 447.6,172.3 448.8,177.3 448.8,177.3 453.8,177.3 453.8,177.3 457.8,177.8 457.8,177.3 462.8,178.3 462.8,177.3 463.8,180.8 465.8,180.8 466.8,177.3 466.8,177.3 468.0,172.3 469.2,177.3 469.2,177.3 470.4,174.8 471.6,177.3 471.6,177.3 472.6,179.8 475.6,179.8 476.6,177.3 476.6,177.3 477.8,172.3 479.0,177.3 479.0,177.3 480.2,174.3 481.4,177.3 481.4,177.3 486.4,176.8 486.4,177.3 489.4,177.8 489.4,177.3 490.6,173.3 491.8,177.3 491.8,177.3 493.0,174.8 494.2,177.3 494.2,177.3 497.2,177.3 497.2,177.3 501.2,177.8 501.2,177.3 502.4,173.8 503.6,177.3 503.6,177.3 504.6,179.8 507.6,179.8 508.6,177.3 508.6,177.3 509.8,174.3 511.0,177.3 511.0,177.3 514.0,177.3 514.0,177.3 515.0,179.3 516.0,179.3 517.0,177.3 517.0,177.3 518.0,179.3 520.0,179.3 521.0,177.3 521.0,177.3 524.0,177.8 524.0,177.3 525.2,172.3 526.4,177.3 526.4,177.3 527.6,174.8 528.8,177.3 528.8,177.3 530.0,174.3 531.2,177.3 531.2,177.3 532.4,173.8 533.6,177.3 533.6,177.3 538.6,177.3 538.6,177.3 539.6,179.3 542.6,179.3 543.6,177.3 543.6,177.3 544.6,180.3 547.6,180.3 548.6,177.3 548.6,177.3 549.8,172.3 551.0,177.3 551.0,177.3 552.0,179.8 553.0,179.8 554.0,177.3 554.0,177.3 555.0,180.3 556.0,180.3 557.0,177.3 557.0,177.3 558.2,173.8 559.4,177.3 559.4,177.3 564.4,177.3 564.4,177.3 566.4,178.3 566.4,177.3 567.4,179.3 570.4,179.3 571.4,177.3 571.4,177.3 576.4,178.3 576.4,177.3 577.4,180.8 579.4,180.8 580.4,177.3 580.4,177.3 581.6,174.8 582.8,177.3 582.8,177.3 584.0,173.3 585.2,177.3 585.2,177.3 586.4,173.8 587.6,177.3 587.6,177.3 592.6,178.3 592.6,177.3 593.6,179.8 595.6,179.8 596.6,177.3 596.6,177.3 597.6,180.8 598.6,180.8 599.6,177.3 599.6,177.3 601.6,177.3 601.6,177.3 602.6,180.8 604.6,180.8 605.6,177.3 605.6,177.3 608.6,178.3 608.6,177.3 612.6,177.8 612.6,177.3 613.6,180.8 615.6,180.8 616.6,177.3 616.6,177.3 617.8,173.3 619.0,177.3 619.0,177.3 621.0,177.8 621.0,177.3 622.2,173.8 623.4,177.3 623.4,177.3 626.4,177.3 626.4,177.3 627.4,179.3 630.4,179.3 631.4,177.3 631.4,177.3 632.6,173.3 633.8,177.3 633.8,177.3 638.8,177.3 638.8,177.3 641.8,178.3 641.8,177.3 643.0,173.8 644.2,177.3 644.2,177.3 645.4,172.3 646.6,177.3 646.6,177.3 650.6,177.3 650.6,177.3 654.6,176.8 654.6,177.3 657.6,177.8 657.6,177.3 658.8,173.8 660.0,177.3 660.0,177.3 663.0,178.3 663.0,177.3 664.0,180.8 666.0,180.8 667.0,177.3 667.0,177.3 668.0,180.3 671.0,180.3 672.0,177.3 672.0,177.3 673.2,173.3 674.4,177.3 674.4,177.3 676.4,177.8 676.4,177.3 679.4,177.3 679.4,177.3 680.6,173.8 681.8,177.3 681.8,177.3 683.0,172.3 684.2,177.3 684.2,177.3 685.2,180.8 688.2,180.8 689.2,177.3 689.2,177.3 690.2,180.8 691.2,180.8 692.2,177.3 692.2,177.3 695.2,177.3 695.2,177.3 698.2,178.3 698.2,177.3 699.4,174.8 700.6,177.3 700.6,177.3 701.8,174.3 703.0,177.3 703.0,177.3 704.0,180.8 707.0,180.8 708.0,177.3 708.0,177.3 712.0,177.8 712.0,177.3 713.0,179.8 714.0,179.8 715.0,177.3 715.0,177.3 716.0,180.8 717.0,180.8 718.0,177.3 718.0,177.3 720.0,177.3 720.0,177.3 721.0,179.8 722.0,179.8 723.0,177.3 723.0,177.3 724.2,172.3 725.4,177.3 725.4,177.3 726.4,180.8 728.4,180.8 729.4,177.3 729.4,177.3 733.4,177.8 733.4,177.3 734.6,173.8 735.8,177.3 735.8,177.3 737.0,174.8 738.2,177.3 738.2,177.3 740.2,177.3 740.2,177.3 741.4,174.8 742.6,177.3 742.6,177.3 745.6,176.8 745.6,177.3 746.8,174.8 748.0,177.3 748.0,177.3 749.2,172.3 750.4,177.3 750.4,177.3 751.4,180.8 752.4,180.8 753.4,177.3 753.4,177.3 754.6,174.3 755.8,177.3 755.8,177.3 759.8,178.3 759.8,177.3 761.0,174.3 762.2,177.3 762.2,177.3 767.2,177.3 767.2,177.3 768.4,174.3 769.6,177.3 769.6,177.3 770.8,174.8 772.0,177.3 772.0,177.3 775.0,177.3 775.0,177.3 780.0,178.3 780.0,177.3 781.2,173.3 782.4,177.3 782.4,177.3 786.4,177.3 786.4,177.3 787.6,172.3 788.8,177.3 788.8,177.3 789.8,179.3 791.8,179.3 792.8,177.3 792.8,177.3 793.8,180.8 796.8,180.8 797.8,177.3 797.8,177.3 799.8,176.8 799.8,177.3 801.0,173.8 802.2,177.3 802.2,177.3 803.2,180.8 806.2,180.8 807.2,177.3 807.2,177.3 810.2,178.3 810.2,177.3 811.4,172.3 812.6,177.3 812.6,177.3 813.6,180.8 816.6,180.8 817.6,177.3 817.6,177.3 821.6,177.3 821.6,177.3 822.8,172.3 824.0,177.3 824.0,177.3 825.2,172.3 826.4,177.3 826.4,177.3 830.4,177.8 830.4,177.3 835.4,177.3 835.4,177.3 838.4,177.3 838.4,177.3 839.6,172.3 840.8,177.3 840.8,177.3 841.8,180.3 842.8,180.3 843.8,177.3 843.8,177.3 845.0,173.3 846.2,177.3 846.2,177.3 847.2,180.8 849.2,180.8 850.2,177.3 850.2,177.3 853.2,176.8 853.2,177.3 854.4,173.3 855.6,177.3 855.6,177.3 856.8,173.3 858.0,177.3 858.0,177.3 859.2,172.3 860.4,177.3 860.4,177.3 863.4,177.3 863.4,177.3 867.4,178.3 867.4,177.3 870.4,177.8 870.4,177.3 875.4,177.8 875.4,177.3 876.4,179.3 879.4,179.3 880.4,177.3 880.4,177.3 884.4,178.3 884.4,177.3 885.6,174.3 886.8,177.3 886.8,177.3 891.8,177.3 891.8,177.3 893.0,174.3 894.2,177.3 894.2,177.3 895.2,180.8 897.2,180.8 898.2,177.3 898.2,177.3 899.2,180.8 902.2,180.8 903.2,177.3 903.2,177.3 905.2,176.8 905.2,177.3 909.2,176.8 909.2,177.3 914.2,177.3 914.2,177.3 917.2,176.8 917.2,177.3 919.2,176.8 919.2,177.3 920.4,174.3 921.6,177.3 921.6,177.3 922.8,173.8 924.0,177.3 924.0,177.3 925.2,172.3 926.4,177.3 926.4,177.3 927.6,174.3 928.8,177.3 928.8,177.3 929.8,179.8 931.8,179.8 932.8,177.3 932.8,177.3 937.8,177.8" fill="none" stroke="#d8d820" stroke-width="1.5" stroke-linejoin="round"/>
<line x1="26" y1="177" x2="934" y2="177" stroke="#b030d0" stroke-width="1.4" stroke-dasharray="7 1" stroke-opacity="0.75"/>
<line x1="26" y1="323" x2="934" y2="323" stroke="#b030d0" stroke-width="1.4" stroke-dasharray="7 1" stroke-opacity="0.75"/>
<path d="M37 322h2v3h-2zM49 322h2v3h-2zM61 322h2v3h-2zM73 322h2v3h-2zM85 322h2v3h-2zM97 322h2v3h-2zM109 322h2v3h-2zM121 322h2v3h-2zM133 322h2v3h-2zM145 322h2v3h-2zM157 322h2v3h-2zM169 322h2v3h-2zM181 322h2v3h-2zM193 322h2v3h-2zM205 322h2v3h-2zM217 322h2v3h-2zM229 322h2v3h-2zM241 322h2v3h-2zM253 322h2v3h-2zM265 322h2v3h-2zM277 322h2v3h-2zM289 322h2v3h-2zM301 322h2v3h-2zM313 322h2v3h-2zM325 322h2v3h-2zM337 322h2v3h-2zM349 322h2v3h-2zM361 322h2v3h-2zM373 322h2v3h-2zM385 322h2v3h-2zM397 322h2v3h-2zM409 322h2v3h-2zM421 322h2v3h-2zM433 322h2v3h-2zM445 322h2v3h-2zM457 322h2v3h-2zM469 322h2v3h-2zM481 322h2v3h-2zM493 322h2v3h-2zM505 322h2v3h-2zM517 322h2v3h-2zM529 322h2v3h-2zM541 322h2v3h-2zM553 322h2v3h-2zM565 322h2v3h-2zM577 322h2v3h-2zM589 322h2v3h-2zM601 322h2v3h-2zM613 322h2v3h-2zM625 322h2v3h-2zM637 322h2v3h-2zM649 322h2v3h-2zM661 322h2v3h-2zM673 322h2v3h-2zM685 322h2v3h-2zM697 322h2v3h-2zM709 322h2v3h-2zM721 322h2v3h-2zM733 322h2v3h-2zM745 322h2v3h-2zM757 322h2v3h-2zM769 322h2v3h-2zM781 322h2v3h-2zM793 322h2v3h-2zM805 322h2v3h-2zM817 322h2v3h-2zM829 322h2v3h-2zM841 322h2v3h-2zM853 322h2v3h-2zM865 322h2v3h-2zM877 322h2v3h-2zM889 322h2v3h-2zM901 322h2v3h-2zM913 322h2v3h-2zM925 322h2v3h-2z" fill="#c8a8dc"/>
<rect x="181" y="316" width="2" height="14" fill="#d0d0d0"/>
<rect x="781" y="316" width="2" height="14" fill="#d0d0d0"/>
<rect x="24" y="23" width="912" height="2" fill="#f4f4f4"/>
<rect x="24" y="620.5" width="912" height="2" fill="#f4f4f4"/>
<rect x="24" y="23" width="2" height="600" fill="#f4f4f4"/>
<rect x="934" y="23" width="2" height="600" fill="#f4f4f4"/>
<!-- top-left purple trigger marker -->
<rect x="24" y="24" width="9" height="17" fill="#000"/>
<path d="M24.8 24.8H32.3V37.5L27 40.8H24.8Z" fill="none" stroke="#8a30d0" stroke-width="1.6"/>
<path d="M25 29H31M26.3 29V37" fill="none" stroke="#b040e0" stroke-width="1.6"/>
<!-- CH2 marker -->
<path d="M0.8 313.5H17L23 323.5L17 334H0.8Z" fill="#000" stroke="#d8e030" stroke-width="1.6"/>
<!-- right trigger level triangle -->
<path d="M939.5 323.5L952 317V330Z" fill="#b020d8"/>
<!-- top bar -->
<rect x="144" y="2" width="96" height="20" rx="10" fill="#e80000"/>
<rect x="300" y="0" width="360" height="22.5" rx="11.2" fill="#000"/>
<rect x="311.5" y="10.3" width="338" height="1.6" fill="#c8c828"/>
<path d="M436.3 3.6H443M439.6 3.6V8.2" stroke="#d020d0" stroke-width="1.6" fill="none"/>
<path d="M449.5 3H447V21.5H449.5M467 3H469.5V21.5H467" stroke="#c8c8d0" stroke-width="1.8" fill="none"/>
<rect x="672" y="0" width="131" height="22.5" rx="11.2" fill="#000"/>
<path d="M677 4.2H691.5V17L684.2 20.3L677 17Z" fill="none" stroke="#8a30d8" stroke-width="1.6"/>
<path d="M679.5 9H689M684.2 9V16.5" stroke="#b040e8" stroke-width="1.8" fill="none"/>
<rect x="821" y="0" width="71" height="22.5" rx="11.2" fill="#000"/>
<!-- usb icon -->
<path d="M907.5 12.5L915 9L922 13L913 19.5Z" fill="#1a4c9c"/>
<path d="M909.5 13.5L919.5 13L917.5 16.5L911.5 18Z" fill="#404878" stroke="#d0b0c8" stroke-width="1.1"/>
<path d="M907 8Q907 4 911 4Q915 4 915 6.5Q913 9 911 12L909 13Q907 11 907 8Z" fill="#30b030"/>
<path d="M908 10Q909 7 911 7L910 11Z" fill="#60d060"/>
<!-- bottom panel -->
<rect x="0" y="623" width="384" height="97" fill="#74b0bc"/>
<rect x="250.5" y="623" width="3" height="48" fill="#78bcc4"/>
<rect x="380" y="623" width="4" height="97" fill="#60b4d8"/>
<rect x="1.5" y="624" width="249" height="22.5" rx="4.5" fill="#000"/>
<rect x="1.5" y="648" width="249" height="22" rx="4.5" fill="#000"/>
<rect x="254" y="624" width="126" height="46" rx="4.5" fill="#000"/>
<rect x="1.5" y="673.5" width="379" height="42.5" rx="4.5" fill="#000"/>
<rect x="384" y="623" width="576" height="97" fill="#0080e0"/>
<rect x="494" y="646" width="466" height="70.5" fill="#0462a2"/>
<rect x="383" y="623.5" width="118.5" height="21.5" rx="10.7" fill="#000"/>
<rect x="797.5" y="623.5" width="155" height="21.5" rx="10.7" fill="#000"/>
<rect x="386.5" y="648.5" width="107.5" height="66.5" rx="3" fill="#003c88"/>
<rect x="386.5" y="648.5" width="105.5" height="64.5" rx="3" fill="#58aaf0"/>
<rect x="388" y="650" width="104" height="63" rx="2" fill="#0080e0"/>
<rect x="409" y="685.5" width="60.5" height="23.5" fill="#e6e6e6"/>
<rect x="717" y="649" width="106.5" height="66.5" rx="3" fill="#003c88"/>
<rect x="717" y="649" width="104.5" height="64.5" rx="3" fill="#58aaf0"/>
<rect x="718.5" y="650.5" width="103" height="63" rx="2" fill="#0080e0"/>
<path d="M822 642.5H832.5L836.8 627H846" stroke="#e0e0e0" stroke-width="1.5" fill="none"/>
<!-- info box -->
<rect x="32" y="540.5" width="222" height="81" rx="5" fill="#000" stroke="#7fb2c8" stroke-width="1.8"/>
<path d="M53.5 557H64L58.8 549.5Z" fill="none" stroke="#e0e0e0" stroke-width="1.3"/>
</svg>
<div class="t" style="left:29px;top:5.4px;color:#0c1e58;font-size:19px;letter-spacing:0.6px;-webkit-text-stroke:0.35px #000;-webkit-text-stroke:0.2px #0c1e58">AKTAKOM</div><div class="t" style="left:168px;top:3.4px;color:#3a0000;font-size:19px;letter-spacing:0.6px;-webkit-text-stroke:0.35px #000;-webkit-text-stroke:0.2px #3a0000">Stop</div><div class="t" style="left:695px;top:4.9px;color:#e8e8e8;font-size:19px;letter-spacing:0.6px;-webkit-text-stroke:0.35px #000;">444.8ms</div><div class="t" style="left:825.5px;top:3.7px;color:#e8e8e8;font-size:19px;letter-spacing:0.6px;-webkit-text-stroke:0.35px #000;">10:56</div><div class="a" style="left:2.5px;top:627.0px;width:19.0px;height:19.0px;border-radius:50%;background:#e80000"></div><svg class="a" style="left:0;top:0" width="960" height="720"><path d="M8.2 633.3L12.3 630.0V642.8" stroke="#000" stroke-width="2.6" fill="none"/></svg><div class="t" style="left:22px;top:628.9px;color:#c81818;font-size:19px;letter-spacing:0.6px;-webkit-text-stroke:0.35px #000;">5V-</div><div class="t" style="left:125.5px;top:628.9px;color:#c81818;font-size:19px;letter-spacing:0.6px;-webkit-text-stroke:0.35px #000;">0.00div</div><div class="a" style="left:2.5px;top:650.5px;width:19.0px;height:19.0px;border-radius:50%;background:#e8e030"></div><div class="t" style="left:2.5px;top:650.5px;width:19.0px;height:19.0px;line-height:19.0px;text-align:center;color:#000;font-size:17.5px;font-weight:bold;font-family:'Liberation Sans',sans-serif;transform:scaleX(0.86)">2</div><div class="t" style="left:22px;top:652.9px;color:#c8c828;font-size:19px;letter-spacing:0.6px;-webkit-text-stroke:0.35px #000;">2V-</div><div class="t" style="left:125.5px;top:652.9px;color:#c8c828;font-size:19px;letter-spacing:0.6px;-webkit-text-stroke:0.35px #000;">0.00div</div><div class="t" style="left:255.5px;top:627.9px;color:#e0e0e0;font-size:19px;letter-spacing:0.6px;-webkit-text-stroke:0.35px #000;">(12.5KS/s)</div><div class="t" style="left:261px;top:650.9px;color:#e0e0e0;font-size:19px;letter-spacing:0.6px;-webkit-text-stroke:0.35px #000;">Depth:10K</div><div class="a" style="left:2.0px;top:674.5px;width:19.0px;height:19.0px;border-radius:50%;background:#e8e030"></div><div class="t" style="left:2.0px;top:674.5px;width:19.0px;height:19.0px;line-height:19.0px;text-align:center;color:#000;font-size:17.5px;font-weight:bold;font-family:'Liberation Sans',sans-serif;transform:scaleX(0.86)">2</div><div class="a" style="left:2.0px;top:697.0px;width:19.0px;height:19.0px;border-radius:50%;background:#e8e030"></div><div class="t" style="left:2.0px;top:697.0px;width:19.0px;height:19.0px;line-height:19.0px;text-align:center;color:#000;font-size:17.5px;font-weight:bold;font-family:'Liberation Sans',sans-serif;transform:scaleX(0.86)">2</div><div class="t" style="left:24px;top:676.9px;color:#c8c828;font-size:19px;letter-spacing:0.6px;-webkit-text-stroke:0.35px #000;">F:  ?</div><div class="t" style="left:24px;top:699.4px;color:#c8c828;font-size:19px;letter-spacing:0.6px;-webkit-text-stroke:0.35px #000;">+D:48.9%</div><div class="a" style="left:192.5px;top:675.0px;width:19.0px;height:19.0px;border-radius:50%;background:#e8e030"></div><div class="t" style="left:192.5px;top:675.0px;width:19.0px;height:19.0px;line-height:19.0px;text-align:center;color:#000;font-size:17.5px;font-weight:bold;font-family:'Liberation Sans',sans-serif;transform:scaleX(0.86)">2</div><div class="a" style="left:192.5px;top:697.0px;width:19.0px;height:19.0px;border-radius:50%;background:#e8e030"></div><div class="t" style="left:192.5px;top:697.0px;width:19.0px;height:19.0px;line-height:19.0px;text-align:center;color:#000;font-size:17.5px;font-weight:bold;font-family:'Liberation Sans',sans-serif;transform:scaleX(0.86)">2</div><div class="t" style="left:215px;top:676.9px;color:#c8c828;font-size:19px;letter-spacing:0.6px;-webkit-text-stroke:0.35px #000;">Vk:3.161v</div><div class="t" style="left:215px;top:699.4px;color:#c8c828;font-size:19px;letter-spacing:0.6px;-webkit-text-stroke:0.35px #000;">V:2.041v</div><div class="t" style="left:405px;top:627.4px;color:#e8e8e8;font-size:19px;letter-spacing:0.6px;-webkit-text-stroke:0.35px #000;">M:40ms</div><div class="a" style="left:800.5px;top:624px;width:20px;height:20px;border-radius:50%;background:#e80000"></div><svg class="a" style="left:0;top:0" width="960" height="720"><path d="M806.7 630.8L810.8 627.5V640.3" stroke="#000" stroke-width="2.6" fill="none"/></svg><div class="t" style="left:847.5px;top:627.9px;color:#e8e8e8;font-size:19px;letter-spacing:0.6px;-webkit-text-stroke:0.35px #000;">0.00mV</div><div class="t" style="left:414px;top:660.4px;color:#0a2060;font-size:19px;letter-spacing:0.6px;-webkit-text-stroke:0.35px #000;-webkit-text-stroke:0.6px #0a2060">Type</div><div class="t" style="left:410px;top:688.9px;color:#101010;font-size:19px;letter-spacing:0.6px;-webkit-text-stroke:0.35px #000;-webkit-text-stroke:0.2px #101010">Image</div><div class="t" style="left:745px;top:674.6px;color:#0a2868;font-size:17px;letter-spacing:2.6px;-webkit-text-stroke:0.35px #000;font-family:'Liberation Sans',sans-serif;-webkit-text-stroke:0.5px #0a2868">Save</div><div class="a" style="left:33.5px;top:541.5px;width:19.0px;height:19.0px;border-radius:50%;background:#e8e030"></div><div class="t" style="left:33.5px;top:541.5px;width:19.0px;height:19.0px;line-height:19.0px;text-align:center;color:#000;font-size:17.5px;font-weight:bold;font-family:'Liberation Sans',sans-serif;transform:scaleX(0.86)">2</div><div class="t" style="left:63px;top:545.9px;color:#e0e0e0;font-size:19px;letter-spacing:0.6px;-webkit-text-stroke:0.35px #000;">y:4.88v</div><div class="t" style="left:51px;top:571.9px;color:#e0e0e0;font-size:19px;letter-spacing:0.6px;-webkit-text-stroke:0.35px #000;">y1:0.0mv</div><div class="t" style="left:51px;top:597.9px;color:#e0e0e0;font-size:19px;letter-spacing:0.6px;-webkit-text-stroke:0.35px #000;">y2:4.88v</div><div class="t" style="left:4.5px;top:315.7px;color:#d8e030;font-size:16px;letter-spacing:0px;-webkit-text-stroke:0.35px #000;font-family:'Liberation Sans',sans-serif;-webkit-text-stroke:0.3px #d8e030">2</div>
</body></html>
